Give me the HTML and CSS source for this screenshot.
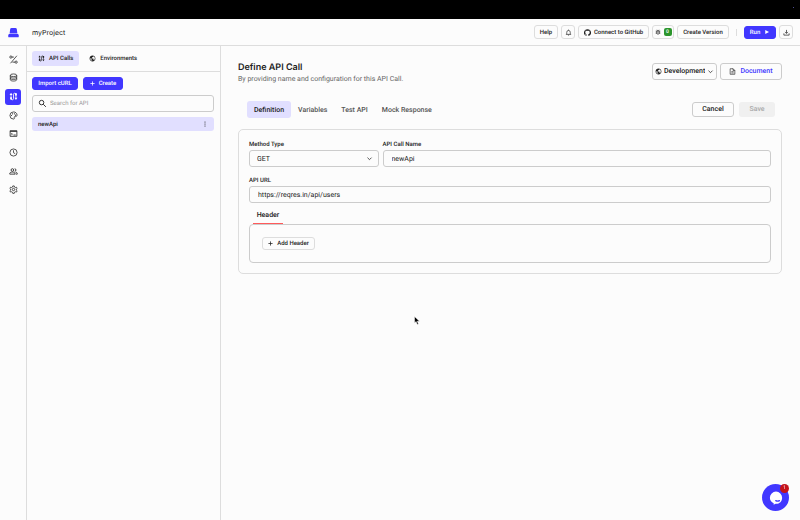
FILE: index.html
```html
<!DOCTYPE html>
<html lang="en">
<head>
  <meta charset="UTF-8">
  <meta name="viewport" content="width=device-width, initial-scale=1.0">
  <title>myProject - API Calls</title>
  <link rel="stylesheet" href="styles.css">
</head>
<body>
  <svg class="sprite" aria-hidden="true">
    <symbol id="i-route" viewBox="0 0 24 24"><path fill="none" stroke="currentColor" stroke-width="2.200" d="M5.500 8v9.500a3 3 0 0 0 6.500 0V6.500a3 3 0 0 1 6.500 0V16"/><path fill="currentColor" d="M1.500 8 5.500 2l4 6zM14.500 15.500l4 6 4-6zM3 14h5v6H3zM16 3h5v6h-5z"/></symbol>
    <symbol id="i-globe" viewBox="0 0 24 24"><path fill="currentColor" d="M12 2C6.480 2 2 6.480 2 12s4.480 10 10 10 10-4.480 10-10S17.520 2 12 2zm-1 17.930c-3.950-.49-7-3.850-7-7.930 0-.62.080-1.210.21-1.790L9 15v1c0 1.100.9 2 2 2v1.930zm6.900-2.540c-.26-.81-1-1.390-1.900-1.390h-1v-3c0-.55-.45-1-1-1H8v-2h2c.55 0 1-.45 1-1V7h2c1.100 0 2-.9 2-2v-.41c2.930 1.190 5 4.060 5 7.410 0 2.080-.8 3.970-2.100 5.390z"/></symbol>
    <symbol id="i-chevron" viewBox="0 0 24 24"><path fill="none" stroke="currentColor" stroke-width="2.600" d="m5 9 7 7 7-7"/></symbol>
    <symbol id="i-plus" viewBox="0 0 24 24"><path fill="none" stroke="currentColor" stroke-width="3.600" d="M12 2v20M2 12h20"/></symbol>
    <symbol id="i-gear" viewBox="0 0 24 24"><circle cx="12" cy="12" r="3.200" fill="none" stroke="currentColor" stroke-width="2"/><path fill="none" stroke="currentColor" stroke-width="2" stroke-linejoin="round" d="M10 2.500h4l.6 3 2.200 1.300 2.900-1 2 3.400-2.300 2v2.400l2.300 2-2 3.400-2.900-1-2.200 1.300-.6 3h-4l-.6-3-2.200-1.300-2.900 1-2-3.400 2.300-2v-2.400l-2.300-2 2-3.400 2.900 1 2.200-1.300z"/></symbol>
  </svg>

  <div class="topbar"><span class="topbar-dot"></span></div>

  <header class="header">
    <a class="logo" href="#" aria-label="Home">
      <svg viewBox="0 0 24 24"><path fill="#4137ff" d="M8 2h8q3 0 3.300 3l1 8H3.700l1-8Q5 2 8 2zM3.500 14.500h17q2.500 0 3 3.500v2.500q0 2-2 2h-19q-2 0-2-2V18q.5-3.500 3-3.500z"/><path fill="#8a84ff" d="M4 13h16v1.500H4z"/></svg>
    </a>
    <span class="project">myProject</span>
    <div class="actions">
      <button class="btn btn-help">Help</button>
      <button class="btn btn-icon" aria-label="Notifications">
        <svg viewBox="0 0 24 24"><path fill="none" stroke="currentColor" stroke-width="2.200" d="M3 18.500h18M6 18v-7a6 6 0 0 1 12 0v7M12 2v3"/><path fill="currentColor" d="M9.500 20h5a2.500 2.500 0 0 1-5 0z"/></svg>
      </button>
      <button class="btn btn-github">
        <svg viewBox="0 0 24 24"><path fill="currentColor" d="M12 .5a12 12 0 0 0-3.800 23.400c.6.1.8-.3.8-.6v-2.200c-3.300.7-4-1.400-4-1.400-.6-1.400-1.400-1.800-1.400-1.800-1-.7.1-.7.1-.7 1.200 0 1.900 1.200 1.900 1.200 1 1.800 2.800 1.300 3.500 1 0-.8.4-1.300.7-1.600-2.700-.3-5.500-1.300-5.500-6 0-1.200.5-2.300 1.300-3.100-.2-.4-.6-1.600 0-3.200 0 0 1-.3 3.400 1.200a11.500 11.500 0 0 1 6 0c2.300-1.500 3.300-1.200 3.300-1.200.6 1.600.2 2.800 0 3.200.9.8 1.300 1.900 1.300 3.200 0 4.600-2.800 5.600-5.500 5.900.5.4.9 1 .9 2.200v3.300c0 .3.1.7.8.6A12 12 0 0 0 12 .5z"/></svg>
        Connect to GitHub
      </button>
      <button class="btn btn-count" aria-label="Issues">
        <svg viewBox="0 0 24 24"><path fill="none" stroke="currentColor" stroke-width="2.400" d="M7 8h10v8a5 5 0 0 1-10 0zM8 3l2 3h4l2-3M3 8h4M3 13h4M3 18h4M17 8h4M17 13h4M17 18h4M10 11h4M10 15h4"/></svg>
        <span class="count">0</span>
      </button>
      <button class="btn btn-version">Create Version</button>
      <span class="divider"></span>
      <button class="btn btn-primary btn-run">Run <svg viewBox="0 0 24 24"><path fill="currentColor" d="M5 4v16l15-8z"/></svg></button>
      <button class="btn btn-icon" aria-label="Download">
        <svg viewBox="0 0 24 24"><path fill="none" stroke="currentColor" stroke-width="2.400" d="M12 3v12M7 10l5 5 5-5M3 15v6h18v-6"/></svg>
      </button>
    </div>
  </header>

  <div class="layout">
    <nav class="rail">
      <a href="#" aria-label="Logic"><svg viewBox="0 0 24 24"><g fill="none" stroke="currentColor" stroke-width="2"><circle cx="5" cy="5.500" r="3"/><circle cx="19" cy="19" r="3"/><path d="M8 5.500h5M21 2 4 22M9 19h7"/></g></svg></a>
      <a href="#" aria-label="Database"><svg viewBox="0 0 24 24"><g fill="none" stroke="currentColor" stroke-width="2"><ellipse cx="12" cy="6" rx="8.500" ry="3.500"/><path d="M3.500 6v12c0 2 4 3.500 8.500 3.500s8.500-1.500 8.500-3.500V6M3.500 10c0 2 4 3.500 8.500 3.500s8.500-1.500 8.500-3.500M3.500 14c0 2 4 3.500 8.500 3.500s8.500-1.500 8.500-3.500"/></g></svg></a>
      <a class="active" href="#" aria-label="API Calls"><svg><use href="#i-route"/></svg></a>
      <a href="#" aria-label="Theme"><svg viewBox="0 0 24 24"><path fill="none" stroke="currentColor" stroke-width="2" d="M12 2.500a9.500 9.500 0 1 0 0 19c1.500 0 2.500-1 2.500-2.300 0-1.300-.8-1.700-.8-2.700 0-.9.7-1.500 1.800-1.500h2c2.300 0 4-2 4-4.300 0-4.600-4.200-8.200-9.500-8.200z"/><g fill="currentColor"><circle cx="6.500" cy="12" r="1.500"/><circle cx="9.500" cy="7.500" r="1.500"/><circle cx="14.500" cy="7.500" r="1.500"/><circle cx="17.500" cy="11" r="1.500"/></g></svg></a>
      <a href="#" aria-label="Terminal"><svg viewBox="0 0 24 24"><path fill="none" stroke="currentColor" stroke-width="2.200" d="M3 4.500h18v15H3zM3 6.500h18M6 10.500l3 3-3 3M12 16h6"/></svg></a>
      <a href="#" aria-label="History"><svg viewBox="0 0 24 24"><g fill="none" stroke="currentColor" stroke-width="2"><circle cx="12" cy="12" r="9.500"/><path d="M12 6v6.500l4.500 2.700"/></g></svg></a>
      <a href="#" aria-label="Members"><svg viewBox="0 0 24 24"><g fill="none" stroke="currentColor" stroke-width="2.200"><circle cx="9" cy="8" r="3.500"/><path d="M2 19v-2c0-2 3.500-3.500 7-3.500s7 1.500 7 3.500v2z"/><path d="M15 4.500a3.500 3.500 0 0 1 0 7M17.500 13.800c3 .5 4.500 1.700 4.500 3.200v2h-4"/></g></svg></a>
      <a href="#" aria-label="Settings"><svg><use href="#i-gear"/></svg></a>
    </nav>

    <aside class="sidebar">
      <div class="side-tabs">
        <button class="side-tab active"><svg><use href="#i-route"/></svg>API Calls</button>
        <button class="side-tab"><svg><use href="#i-globe"/></svg>Environments</button>
      </div>
      <div class="side-body">
        <div class="side-buttons">
          <button class="btn btn-primary btn-import">Import cURL</button>
          <button class="btn btn-primary btn-create"><svg><use href="#i-plus"/></svg>Create</button>
        </div>
        <label class="search">
          <svg viewBox="0 0 24 24"><g fill="none" stroke="currentColor" stroke-width="2.400"><circle cx="9.500" cy="9.500" r="6"/><path d="m14 14 7 7"/></g></svg>
          <input type="text" placeholder="Search for API" aria-label="Search for API">
        </label>
        <div class="api-item">
          <a href="#">newApi</a>
          <button aria-label="More"><svg viewBox="0 0 24 24"><g fill="currentColor"><circle cx="12" cy="4" r="2.200"/><circle cx="12" cy="12" r="2.200"/><circle cx="12" cy="20" r="2.200"/></g></svg></button>
        </div>
      </div>
    </aside>

    <main class="main">
      <div class="title-row">
        <div>
          <h1>Define API Call</h1>
          <p>By providing name and configuration for this API Call.</p>
        </div>
        <div class="title-actions">
          <div class="env">
            <svg><use href="#i-globe"/></svg>
            <select aria-label="Environment"><option>Development</option></select>
            <svg class="chev"><use href="#i-chevron"/></svg>
          </div>
          <button class="btn-doc">
            <svg viewBox="0 0 24 24"><path fill="none" stroke="currentColor" stroke-width="2.200" d="M4 2.500h10l6 6v13H4zM14 2.500v6h6M8 12.500h8M8 17h8"/></svg>
            <span>Document</span>
          </button>
        </div>
      </div>

      <div class="tab-row">
        <div class="tabs">
          <button class="tab active">Definition</button>
          <button class="tab">Variables</button>
          <button class="tab">Test API</button>
          <button class="tab">Mock Response</button>
        </div>
        <div class="form-actions">
          <button class="btn-cancel">Cancel</button>
          <button class="btn-save" disabled>Save</button>
        </div>
      </div>

      <form class="card">
        <div class="row">
          <div class="field field-method">
            <label for="method">Method Type</label>
            <div class="select-wrap">
              <select id="method"><option>GET</option></select>
              <svg class="chev"><use href="#i-chevron"/></svg>
            </div>
          </div>
          <div class="field field-name">
            <label for="callName">API Call Name</label>
            <input type="text" id="callName" value="newApi">
          </div>
        </div>
        <div class="field">
          <label for="url">API URL</label>
          <input type="text" id="url" value="https://reqres.in/api/users">
        </div>
        <div class="header-tabs">
          <button type="button" class="header-tab">Header</button>
        </div>
        <div class="header-box">
          <button type="button" class="btn btn-add"><svg><use href="#i-plus"/></svg>Add Header</button>
        </div>
      </form>
    </main>
  </div>

  <svg class="cursor" viewBox="0 0 12 18" aria-hidden="true"><path stroke="#fff" d="M1 1v13l3-3 2.500 6 2.500-1-2.500-5.500H11z"/></svg>

  <button class="chat" aria-label="Open chat">
    <svg viewBox="0 0 24 24"><path fill="#fff" d="M12 1a10.500 10.500 0 0 1 10.500 10.500c0 6-4.500 10.500-10 10.500-1.500 0-2 1-4.500 1.500V21C4 19 1.500 16 1.500 11.500A10.500 10.500 0 0 1 12 1z"/><path fill="none" stroke="#4137ff" stroke-width="2" stroke-linecap="round" d="M11.500 16.500c2 1.200 4.500 1.200 6.500 0"/></svg>
    <span class="chat-badge">1</span>
  </button>
</body>
</html>
```

FILE: styles.css
```css
* {
  box-sizing: border-box;
}
body {
  margin: 0;
  min-height: 100vh;
  display: flex;
  flex-direction: column;
  font-family: Roboto, "Liberation Sans", sans-serif;
  font-size: 6px;
  line-height: 9px;
  text-rendering: geometricPrecision;
  color: #222;
  background-color: #fcfcfc;
}
button, input, select {
  margin: 0;
  padding: 0;
  border: 0;
  background: none;
  font: inherit;
  color: inherit;
  text-rendering: inherit;
}
select {
  appearance: none;
}
a {
  color: inherit;
  text-decoration: none;
}
svg {
  display: block;
  flex: none;
  width: 7px;
  height: 7px;
}
.sprite {
  position: absolute;
  width: 0;
  height: 0;
}

/* Header */
.topbar {
  display: flex;
  justify-content: flex-end;
  height: 19px;
  padding: 7px 6px;
  background-color: #000;
}
.topbar-dot {
  width: 1px;
  height: 1px;
  background-color: #4a4a90;
}
.header {
  display: flex;
  align-items: center;
  height: 27px;
  padding-right: 7px;
  border-bottom: 1px solid #ddd;
}
.logo {
  width: 32px;
  padding-left: 8px;
}
.logo svg {
  width: 11px;
  height: 11px;
}
.project {
  font-family: Inter, sans-serif;
  font-size: 7px;
}
.actions {
  display: flex;
  align-items: center;
  gap: 3px;
  margin-left: auto;
}
.btn {
  display: flex;
  align-items: center;
  justify-content: center;
  height: 14px;
  border: 1px solid #ddd;
  border-radius: 3px;
  font-size: 6px;
  font-weight: 500;
  white-space: nowrap;
}
.btn-primary {
  color: #fff;
  background-color: #4137ff;
  border-color: #4137ff;
}
.btn-help {
  width: 24px;
}
.btn-icon {
  width: 14px;
}
.btn-github {
  width: 71px;
  gap: 3px;
}
.btn-count {
  width: 22px;
  gap: 3px;
}
.btn-count svg {
  width: 6px;
  height: 6px;
}
.count {
  width: 8px;
  height: 8px;
  border-radius: 2px;
  font-size: 5px;
  line-height: 8px;
  color: #fff;
  background-color: #2c952c;
}
.btn-version {
  width: 52px;
}
.divider {
  width: 1px;
  height: 7px;
  margin: 0 4px;
  background-color: #ddd;
}
.btn-run {
  width: 32px;
  height: 13px;
  gap: 4px;
}
.btn-run svg {
  width: 6px;
  height: 6px;
}

/* Left side */
.layout {
  flex: 1;
  display: flex;
}
.rail {
  display: grid;
  grid-template-rows: repeat(8, 1fr);
  align-self: flex-start;
  place-items: center;
  width: 26px;
  height: 149px;
  margin-top: 4px;
}
.rail a {
  display: flex;
  align-items: center;
  justify-content: center;
  width: 16px;
  height: 16px;
  border-radius: 3px;
}
.rail svg {
  width: 9px;
  height: 9px;
}
.rail .active {
  color: #fff;
  background-color: #4137ff;
}
.sidebar {
  width: 195px;
  border: solid #ddd;
  border-width: 0 1px;
}
.side-tabs {
  display: flex;
  gap: 4px;
  padding: 5px;
  border-bottom: 1px solid #ddd;
}
.side-tab {
  display: flex;
  align-items: center;
  gap: 4px;
  height: 15px;
  padding: 0 6px;
  border-radius: 3px;
  font-weight: 500;
}
.side-tab.active {
  background-color: #e1dfff;
}
.side-body {
  display: flex;
  flex-direction: column;
  gap: 5px;
  padding: 5px 6px 5px 5px;
}
.side-buttons {
  display: flex;
  gap: 5px;
}
.side-buttons .btn {
  height: 13px;
}
.btn-import {
  width: 46px;
}
.btn-create {
  width: 40px;
  gap: 4px;
}
.btn-create svg, .btn-add svg {
  width: 5px;
  height: 5px;
}
.search {
  display: flex;
  align-items: center;
  gap: 3px;
  height: 17px;
  padding: 0 5px;
  border: 1px solid #ccc;
  border-radius: 3px;
}
.search svg {
  width: 9px;
  height: 9px;
}
.search input {
  flex: 1;
  min-width: 0;
}
.search input::placeholder {
  color: #999;
}
.api-item {
  display: flex;
  align-items: center;
  justify-content: space-between;
  height: 14px;
  padding: 0 6px;
  border-radius: 3px;
  font-weight: 500;
  background-color: #e1dfff;
}
.api-item svg {
  width: 6px;
  height: 6px;
}

/* Main */
.main {
  flex: 1;
  min-width: 0;
  padding: 15px 18px 15px 17px;
}
.title-row, .tab-row {
  display: flex;
  justify-content: space-between;
}
.title-row h1 {
  margin: 0;
  font-family: Inter, sans-serif;
  font-size: 9px;
  font-weight: 600;
  line-height: 13px;
}
.title-row p {
  margin: 0;
  font-size: 7px;
  line-height: 10px;
  color: #666;
}
.title-actions {
  display: flex;
  gap: 3px;
  padding-top: 2px;
  font-size: 7px;
  font-weight: 500;
}
.env {
  display: flex;
  align-items: center;
  width: 65px;
  height: 17px;
  gap: 2px;
  padding: 0 2px;
  border: 1px solid #ccc;
  border-radius: 3px;
}
.env select {
  flex: 1;
  min-width: 0;
}
.btn-doc {
  display: flex;
  align-items: center;
  justify-content: center;
  gap: 4px;
  width: 62px;
  height: 17px;
  border: 1px solid #ccc;
  border-radius: 3px;
}
.btn-doc span {
  color: #4137ff;
}
.tab-row {
  align-items: center;
  margin-top: 17px;
  padding: 0 7px 0 9px;
}
.tabs, .form-actions {
  display: flex;
}
.tab {
  height: 17px;
  padding: 1px 7px 0;
  border-radius: 3px;
  font-size: 7px;
  font-weight: 500;
  color: #555;
}
.tab.active {
  color: #222;
  background-color: #e1dfff;
}
.form-actions {
  gap: 5px;
}
.btn-cancel, .btn-save {
  height: 15px;
  border-radius: 3px;
  font-size: 7px;
  font-weight: 500;
}
.btn-cancel {
  width: 42px;
  border: 1px solid #ccc;
}
.btn-save {
  width: 36px;
  color: #aaa;
  background-color: #f0f0f0;
}
.card {
  margin-top: 11px;
  padding: 10px;
  border: 1px solid #ddd;
  border-radius: 5px;
}
.row {
  display: flex;
  gap: 4px;
  margin-bottom: 9px;
}
.field label {
  display: block;
  line-height: 10px;
  font-weight: 500;
}
.field-method {
  flex: 1;
}
.field-name {
  flex: 3;
}
.field input, .field select {
  display: block;
  width: 100%;
  height: 17px;
  padding: 0 8px;
  border: 1px solid #ccc;
  border-radius: 3px;
  font-size: 7px;
}
.field select {
  padding: 1px 7px 0;
}
.select-wrap {
  position: relative;
}
.select-wrap .chev {
  position: absolute;
  right: 6px;
  top: 5px;
}
.header-tabs {
  padding: 4px 4px 0;
}
.header-tab {
  display: block;
  width: 30px;
  height: 17px;
  padding-top: 1px;
  border-bottom: 1px solid #ff5a5a;
  font-size: 7px;
  font-weight: 500;
}
.header-box {
  padding: 12px;
  border: 1px solid #ccc;
  border-radius: 4px;
}
.btn-add {
  width: 53px;
  height: 13px;
  gap: 4px;
}

/* Overlays */
.cursor {
  position: absolute;
  left: 414px;
  top: 316px;
  width: 6px;
  height: 9px;
}
.chat {
  position: fixed;
  right: 11px;
  bottom: 9px;
  display: flex;
  align-items: center;
  justify-content: center;
  width: 27px;
  height: 27px;
  border-radius: 50%;
  background-color: #4137ff;
}
.chat svg {
  width: 14px;
  height: 14px;
}
.chat-badge {
  position: absolute;
  right: 0;
  top: 0;
  width: 9px;
  height: 9px;
  border-radius: 50%;
  font-size: 5px;
  line-height: 9px;
  color: #fff;
  background-color: #c4121a;
}
```
